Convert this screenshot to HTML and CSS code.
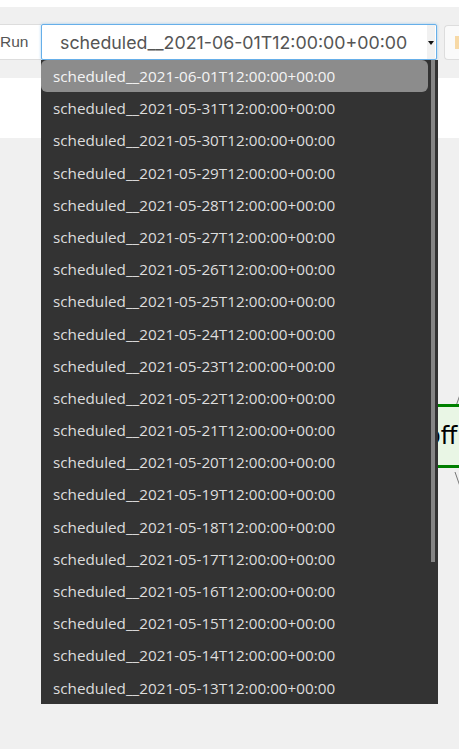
FILE: index.html
```html
<!DOCTYPE html>
<html lang="en">
<head>
    <meta charset="UTF-8">
    <meta name="viewport" content="width=device-width, initial-scale=1.0">
    <title>DAG run picker</title>
    <link rel="stylesheet" href="styles.css">
</head>
<body>
    <div class="top-strip"></div>

    <div class="toolbar">
        <div class="run-label">Run</div>
        <div class="run-select">
            <span class="run-value">scheduled__2021-06-01T12:00:00+00:00</span>
            <span class="select-arrow"></span>

            <ul class="run-list">
                <li class="active">scheduled__2021-06-01T12:00:00+00:00</li>
                <li>scheduled__2021-05-31T12:00:00+00:00</li>
                <li>scheduled__2021-05-30T12:00:00+00:00</li>
                <li>scheduled__2021-05-29T12:00:00+00:00</li>
                <li>scheduled__2021-05-28T12:00:00+00:00</li>
                <li>scheduled__2021-05-27T12:00:00+00:00</li>
                <li>scheduled__2021-05-26T12:00:00+00:00</li>
                <li>scheduled__2021-05-25T12:00:00+00:00</li>
                <li>scheduled__2021-05-24T12:00:00+00:00</li>
                <li>scheduled__2021-05-23T12:00:00+00:00</li>
                <li>scheduled__2021-05-22T12:00:00+00:00</li>
                <li>scheduled__2021-05-21T12:00:00+00:00</li>
                <li>scheduled__2021-05-20T12:00:00+00:00</li>
                <li>scheduled__2021-05-19T12:00:00+00:00</li>
                <li>scheduled__2021-05-18T12:00:00+00:00</li>
                <li>scheduled__2021-05-17T12:00:00+00:00</li>
                <li>scheduled__2021-05-16T12:00:00+00:00</li>
                <li>scheduled__2021-05-15T12:00:00+00:00</li>
                <li>scheduled__2021-05-14T12:00:00+00:00</li>
                <li>scheduled__2021-05-13T12:00:00+00:00</li>
            </ul>
            <div class="list-thumb"></div>
        </div>
        <button class="go-btn"><span class="go-icon"></span></button>
    </div>

    <div class="legend-panel"></div>

    <div class="graph">
        <svg class="edges" width="459" height="200">
            <line x1="455" y1="5" x2="462" y2="-15" />
            <line x1="455" y1="68" x2="462" y2="88" />
        </svg>
        <div class="task-node">off</div>
    </div>
</body>
</html>
```

FILE: styles.css
```css
body {
    margin: 0;
    background-color: #f0f0f0;
    font-family: 'Liberation Sans', Arial, sans-serif;
    color: #333;
    overflow: hidden;
}
.top-strip {
    height: 7px;
    background-color: #fff;
}
.toolbar {
    display: flex;
    align-items: stretch;
    margin-top: 17px;
    height: 36px;
}
.run-label {
    flex-shrink: 0;
    width: 41px;
    box-sizing: border-box;
    display: flex;
    align-items: center;
    background-color: #fff;
    border-top: 1px solid #ddd;
    border-bottom: 1px solid #ddd;
    font-size: 15.5px;
    color: #555;
}
.run-select {
    flex-shrink: 0;
    position: relative;
    width: 396px;
    box-sizing: border-box;
    display: flex;
    align-items: center;
    background-color: #fff;
    border: 1px solid #66afe9;
    border-radius: 2px;
    box-shadow: 0 0 3px rgba(102,175,233,0.6);
}
.run-value {
    flex: 1;
    padding-left: 18px;
    font-family: Inter, sans-serif;
    font-size: 17.8px;
    color: #555;
    white-space: nowrap;
}
.select-arrow {
    align-self: stretch;
    width: 8px;
    margin-right: 1px;
    background-color: #f1f1f1;
    position: relative;
}
.select-arrow::after {
    content: '';
    position: absolute;
    left: 1px;
    top: 16px;
    border-left: 3px solid transparent;
    border-right: 3px solid transparent;
    border-top: 4px solid #111;
}
.go-btn {
    flex-shrink: 0;
    margin-left: 7px;
    margin-top: 1px;
    width: 15px;
    box-sizing: border-box;
    background-color: #fafafa;
    border: 1px solid #ddd;
    border-right: none;
    border-radius: 4px 0 0 4px;
    padding: 0 0 0 10px;
    display: flex;
    align-items: center;
}
.go-icon {
    display: block;
    width: 5px;
    height: 13px;
    background-color: #f7d9a6;
}
.run-list {
    position: absolute;
    z-index: 10;
    left: -1px;
    top: 35px;
    width: 397px;
    margin: 0;
    padding: 0 10px 0 0;
    box-sizing: border-box;
    list-style: none;
    background-color: #333;
    font-family: 'Open Sans', 'Noto Sans', sans-serif;
    font-size: 15.25px;
    color: #ddd;
}
.run-list li {
    height: 32.2px;
    line-height: 32px;
    padding-left: 12px;
    white-space: nowrap;
}
.run-list li.active {
    background-color: #8c8c8c;
    color: #f4f4f4;
    border-radius: 6px;
}
.list-thumb {
    position: absolute;
    z-index: 11;
    top: 35px;
    right: 1px;
    width: 4px;
    height: 502px;
    background-color: #858585;
}
.legend-panel {
    margin-top: 18px;
    height: 60px;
    background-color: #fff;
}
.graph {
    position: relative;
    height: 611px;
    overflow: hidden;
}
.edges {
    position: absolute;
    left: 0;
    top: 266px;
    overflow: visible;
}
.edges line {
    stroke: #777;
    stroke-width: 1;
}
.task-node {
    position: absolute;
    left: 400px;
    top: 266px;
    width: 59px;
    height: 64px;
    padding-left: 26px;
    box-sizing: border-box;
    background-color: #e9f6e5;
    border-top: 3px solid #008000;
    border-bottom: 3px solid #008000;
    font-family: 'DejaVu Sans', sans-serif;
    font-size: 24px;
    line-height: 58px;
    color: #000;
    white-space: nowrap;
}
```
